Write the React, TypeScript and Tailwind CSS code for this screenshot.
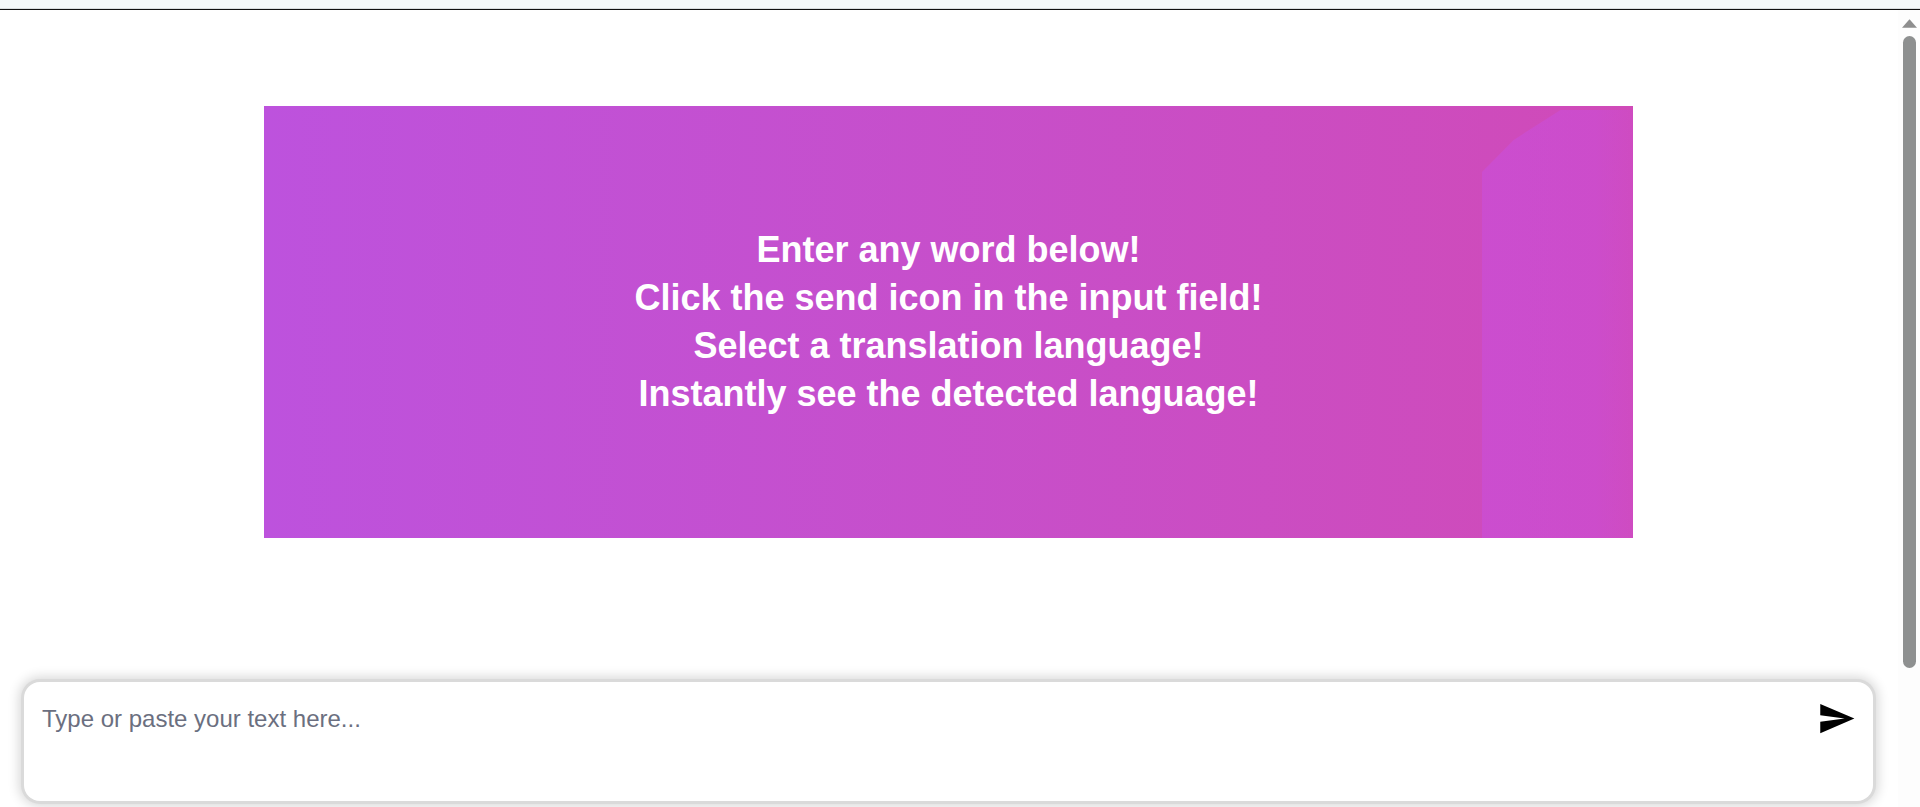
import React from 'react';

const App: React.FC = () => {
  return (
    <div className="h-[807px] overflow-hidden bg-white flex flex-col font-['Liberation_Sans',Arial,sans-serif]">
      {/* browser strip */}
      <div className="h-[9px] shrink-0 bg-[#f4f8f9] border-b border-[#d9dddf]" />
      <div className="h-px shrink-0 bg-[#111]" />

      <div className="flex-1 flex min-h-0">
        <main className="flex-1 flex flex-col min-w-0">
          {/* banner */}
          <div className="relative mt-[96px] ml-[264px] w-[1369px] h-[432px] flex items-center justify-center overflow-hidden bg-linear-to-r from-[#bd52dd] to-[#d04ab8]">
            <div className="absolute right-0 top-[4px] bottom-0 w-[151px] bg-linear-to-r from-[#c850e6]/45 via-[#c850e6]/40 via-75% to-[#c850e6]/20 [clip-path:polygon(52%_0,100%_0,100%_100%,0_100%,0_14.5%,21%_7%)]" />
            <div className="relative text-center text-white font-bold text-[36px] leading-[48px]">
              <p>Enter any word below!</p>
              <p>Click the send icon in the input field!</p>
              <p>Select a translation language!</p>
              <p>Instantly see the detected language!</p>
            </div>
          </div>

          {/* input */}
          <div className="mt-[144px] ml-[24px] mr-[25px] h-[119px] flex items-start justify-between rounded-2xl bg-white pl-[18px] pr-[17px] pt-[18px] shadow-[0_0_0_3px_#dadada,0_0_12px_5px_rgba(0,0,0,0.16)]">
            <textarea
              rows={2}
              placeholder="Type or paste your text here..."
              className="flex-1 mt-px resize-none bg-transparent outline-none text-[24px] leading-[36px] text-gray-900 placeholder:text-[#6b6f80]"
            />
            <svg viewBox="0 0 24 24" className="w-[39px] h-[39px] shrink-0 -mt-px" fill="#000">
              <path d="M2.01 21 23 12 2.01 3 2 10l15 2-15 2z" />
            </svg>
          </div>
        </main>

        {/* scrollbar */}
        <div className="w-[22px] shrink-0 bg-[#fdfdfd] flex flex-col items-center pt-[9px]">
          <svg viewBox="0 0 16 9" className="w-[15px] h-[9px] ml-[1px]" fill="#8e8e8e">
            <path d="M8 0 16 9H0z" />
          </svg>
          <div className="mt-[8px] ml-[1px] w-[13px] h-[632px] rounded-full bg-[#8e9090]" />
        </div>
      </div>
    </div>
  );
};

export default App;
